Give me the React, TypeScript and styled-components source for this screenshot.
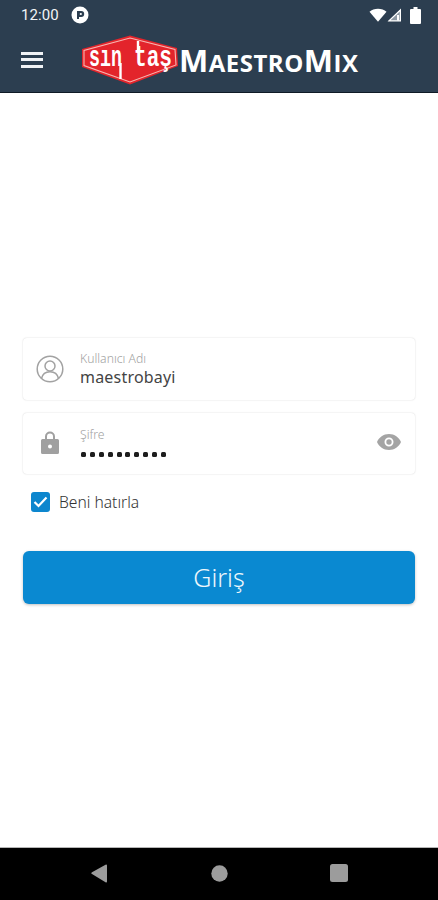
import React from "react";
import styled, { createGlobalStyle } from "styled-components";

const Global = createGlobalStyle`
  html, body { margin: 0; padding: 0; background: #fff; }
  body { font-family: "Noto Sans", "Open Sans", sans-serif; }
  * { box-sizing: border-box; }
`;

const Page = styled.div`
  width: 438px;
  height: 900px;
  display: flex;
  flex-direction: column;
  overflow: hidden;
  background: #fff;
`;

const Header = styled.header`
  height: 93px;
  flex: none;
  background: #2c3e50;
  border-bottom: 1px solid #0f1a26;
  display: flex;
  flex-direction: column;
`;

const StatusBar = styled.div`
  height: 29px;
  padding: 1px 17px 0 21px;
  display: flex;
  align-items: center;
  color: #f2f4f6;
`;

const Clock = styled.span`
  font-family: "Roboto", sans-serif;
  font-size: 15px;
  letter-spacing: 0.1px;
  margin-right: 12px;
`;

const Spacer = styled.div`
  flex: 1;
`;

const AppBar = styled.div`
  flex: 1;
  display: flex;
  align-items: center;
  padding: 0 0 2px 21px;
`;

const MenuButton = styled.div`
  width: 22px;
  height: 16px;
  display: flex;
  flex-direction: column;
  justify-content: space-between;
  margin-right: 38px;
  & > span {
    display: block;
    height: 3px;
    background: #f0f2f5;
  }
`;

const Brand = styled.div`
  display: flex;
  align-items: center;
`;

const LogoText = styled.text`
  font-family: "Liberation Mono", monospace;
  font-weight: 700;
  font-size: 24px;
  fill: #fff;
`;

const BrandName = styled.span`
  font-family: "Open Sans", sans-serif;
  font-weight: 700;
  font-size: 31px;
  line-height: 1;
  color: #fff;
  letter-spacing: 0.5px;
  margin-top: 1px;
`;

const BrandSmall = styled.span`
  font-size: 24px;
  text-transform: uppercase;
  font-weight: 700;
`;

const Main = styled.main`
  flex: 1;
  display: flex;
  flex-direction: column;
  justify-content: center;
  padding: 2px 23px 0;
`;

const Field = styled.div<{ $h: number }>`
  height: ${(p) => p.$h}px;
  background: #fff;
  border-radius: 4px;
  box-shadow: 0 0 2px rgba(0, 0, 0, 0.14), 0 0 1px rgba(0, 0, 0, 0.06);
  display: flex;
  align-items: center;
  margin-bottom: 13px;
`;

const FieldIcon = styled.div<{ $up: number }>`
  width: 57px;
  flex: none;
  display: flex;
  justify-content: center;
  padding-right: 3px;
  margin-top: ${(p) => -p.$up}px;
`;

const FieldBody = styled.div`
  flex: 1;
  display: flex;
  flex-direction: column;
`;

const FieldLabel = styled.span`
  font-size: 12.2px;
  line-height: 16px;
  color: #a2a2a2;
  font-weight: 300;
`;

const FieldValue = styled.span`
  font-size: 16px;
  line-height: 21px;
  color: #444;
  letter-spacing: 0.2px;
`;

const Dots = styled.div`
  display: flex;
  gap: 3.9px;
  margin-top: 9px;
  margin-left: 1px;
  margin-bottom: 4px;
  & > i {
    display: block;
    width: 5px;
    height: 5px;
    border-radius: 1.5px;
    background: #1d1d1d;
  }
`;

const Eye = styled.div`
  margin-right: 13px;
  display: flex;
  margin-top: -3px;
`;

const RememberRow = styled.div`
  display: flex;
  align-items: center;
  margin: 4px 0 39px 8px;
  height: 21px;
`;

const CheckBox = styled.div`
  width: 19px;
  height: 20px;
  border-radius: 3px;
  background: #0c86ce;
  display: flex;
  align-items: center;
  justify-content: center;
  margin-right: 9px;
`;

const RememberText = styled.span`
  font-size: 15.6px;
  font-weight: 300;
  color: #333;
`;

const LoginButton = styled.button`
  height: 53px;
  width: 100%;
  border: 0;
  border-radius: 6px;
  background: #0a89d1;
  color: #eef7fc;
  font-family: "Noto Sans", sans-serif;
  font-size: 25px;
  font-weight: 300;
  padding: 0 0 2px;
  box-shadow: 0 1px 3px rgba(0, 0, 0, 0.25);
`;

const NavBar = styled.nav`
  height: 53px;
  flex: none;
  background: #000;
  border-top: 1px solid #b5b5b5;
  display: flex;
  align-items: center;
  justify-content: space-between;
  padding: 0 90px 2px 91px;
`;

function LogoMark() {
  return (
    <svg width="98" height="50" viewBox="0 0 98 50">
      <polygon points="49,0.5 96,13 97,31 49,49.5 1,32 1,14" fill="#e3242b" />
      <polygon points="49,3 94,14.500 95,30 49,47 3,30.500 3,15.500" fill="none" stroke="#f7b5b0" strokeWidth="1.100" />
      <LogoText transform="translate(8 31) scale(0.76 1.200)">sın</LogoText>
      <LogoText transform="translate(53 31) scale(0.88 1.200)">taş</LogoText>
      <path d="M39.500 28V44M57 6V18" stroke="#fff" strokeWidth="2.400" fill="none" />
    </svg>
  );
}

export default function App() {
  return (
    <Page>
      <Global />
      <Header>
        <StatusBar>
          <Clock>12:00</Clock>
          <svg width="18" height="18" viewBox="0 0 18 18">
            <circle cx="9" cy="9" r="8.500" fill="#fff" />
            <path d="M6 13V5h4.200a3 3 0 0 1 0 6H8v2z" fill="#2c3e50" />
            <circle cx="9.800" cy="8" r="1.100" fill="#fff" />
          </svg>
          <Spacer />
          <svg width="18" height="14" viewBox="0 0 19 14">
            <path d="M0.500 3.500C5-.6 14-.6 18.500 3.500L9.500 14z" fill="#fff" />
          </svg>
          <svg width="15" height="14" viewBox="0 0 15 14">
            <path d="M14 1V13H1z" fill="#8d98a3" />
            <path d="M14 0.500V13.500H0.500zM12.800 3.500L3.500 12.300H12.800z" fill="#fff" fillRule="evenodd" />
            <rect x="10" y="7" width="2" height="5.500" fill="#fff" />
          </svg>
          <svg width="11" height="17" viewBox="0 0 11 17" style={{ marginLeft: 8 }}>
            <path d="M3.500 0h4v2H10a1 1 0 0 1 1 1v13a1 1 0 0 1-1 1H1a1 1 0 0 1-1-1V3a1 1 0 0 1 1-1h2.500z" fill="#fff" />
          </svg>
        </StatusBar>
        <AppBar>
          <MenuButton>
            <span />
            <span />
            <span />
          </MenuButton>
          <Brand>
            <LogoMark />
            <BrandName>
              M<BrandSmall>aestro</BrandSmall>M<BrandSmall>ix</BrandSmall>
            </BrandName>
          </Brand>
        </AppBar>
      </Header>
      <Main>
        <Field $h={62}>
          <FieldIcon $up={1}>
            <svg width="28" height="28" viewBox="0 0 28 28" fill="none" stroke="#a2a2a2" strokeWidth="1.500">
              <circle cx="14" cy="14" r="12.800" />
              <circle cx="14" cy="11" r="5" />
              <path d="M5.500 23.500c1-4.500 4-6.800 8.500-6.800s7.500 2.300 8.500 6.800" />
            </svg>
          </FieldIcon>
          <FieldBody>
            <FieldLabel>Kullanıcı Adı</FieldLabel>
            <FieldValue>maestrobayi</FieldValue>
          </FieldBody>
        </Field>
        <Field $h={61}>
          <FieldIcon $up={3}>
            <svg width="20" height="24" viewBox="0 0 20 24">
              <path
                fillRule="evenodd"
                d="M5 9V6.500a5 5 0 0 1 10 0V9h2.500a1.500 1.500 0 0 1 1.500 1.500v12a1.500 1.500 0 0 1-1.500 1.500h-15A1.500 1.500 0 0 1 1 22.500v-12A1.500 1.500 0 0 1 2.500 9zM7 9h6V6.500a3 3 0 0 0-6 0zM10 14.500a2 2 0 1 0 0 4 2 2 0 0 0 0-4z"
                fill="#a0a0a0"
              />
            </svg>
          </FieldIcon>
          <FieldBody>
            <FieldLabel>Şifre</FieldLabel>
            <Dots>
              {Array.from({ length: 10 }, (_, i) => (
                <i key={i} />
              ))}
            </Dots>
          </FieldBody>
          <Eye>
            <svg width="26" height="18" viewBox="0 0 26 18">
              <path
                fillRule="evenodd"
                d="M13 1C7.500 1 3 4.300 1 9c2 4.700 6.500 8 12 8s10-3.300 12-8c-2-4.700-6.500-8-12-8zM13 4.500a4.500 4.500 0 1 1 0 9 4.500 4.500 0 0 1 0-9z"
                fill="#a4a4a4"
              />
              <circle cx="13" cy="9" r="2.700" fill="#a4a4a4" />
            </svg>
          </Eye>
        </Field>
        <RememberRow>
          <CheckBox>
            <svg width="15" height="12" viewBox="0 0 15 12" fill="none" stroke="#fff" strokeWidth="2.200">
              <path d="M1.500 6l4 4 8-8.500" />
            </svg>
          </CheckBox>
          <RememberText>Beni hatırla</RememberText>
        </RememberRow>
        <LoginButton>Giriş</LoginButton>
      </Main>
      <NavBar>
        <svg width="17" height="19" viewBox="0 0 17 19">
          <path d="M16 1.500V17.500a1 1 0 0 1-1.500.8L1 10a1 1 0 0 1 0-1.700L14.500.700A1 1 0 0 1 16 1.500z" fill="#9c9c9c" />
        </svg>
        <svg width="17" height="17" viewBox="0 0 17 17">
          <circle cx="8.500" cy="8.500" r="8.200" fill="#9c9c9c" />
        </svg>
        <svg width="18" height="18" viewBox="0 0 18 18">
          <rect width="18" height="18" rx="2.500" fill="#9c9c9c" />
        </svg>
      </NavBar>
    </Page>
  );
}
